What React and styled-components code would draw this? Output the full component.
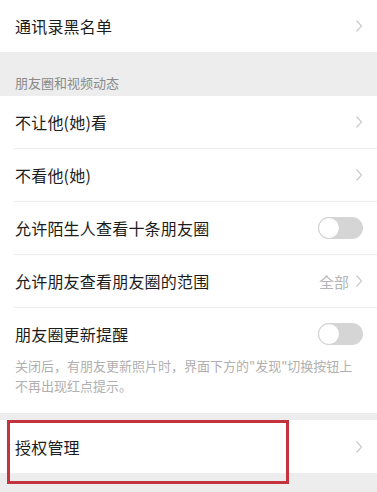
import styled, { createGlobalStyle } from 'styled-components';

const GlobalStyle = createGlobalStyle`
  html, body {
    margin: 0;
    padding: 0;
    background: #ededed;
  }
  body {
    font-family: "Noto Sans CJK SC", "Noto Sans", sans-serif;
    -webkit-font-smoothing: antialiased;
  }
`;

const Page = styled.div`
  width: 377px;
  height: 492px;
  overflow: hidden;
  background: #ededed;
`;

const Group = styled.div`
  position: relative;
  background: #fff;
  margin-top: ${(p) => p.$gap || 0}px;
`;

const SectionHeader = styled.div`
  height: 44px;
  box-sizing: border-box;
  padding: 21px 15px 0;
  font-size: 13px;
  line-height: 20px;
  color: #8a8a8a;
`;

// divider starts at the text indent and runs to the right edge
const Row = styled.div`
  display: flex;
  align-items: center;
  height: ${(p) => p.$height || 52}px;
  padding: 0 14px 0 15px;
  position: relative;
  margin-bottom: ${(p) => (p.$divider ? 1 : 0)}px;

  &::after {
    content: '';
    display: ${(p) => (p.$divider ? 'block' : 'none')};
    position: absolute;
    left: 14px;
    right: 0;
    bottom: -1px;
    height: 1px;
    background: #ececec;
  }
`;

const Label = styled.span`
  flex: 1;
  font-size: 16px;
  color: #1c1c1c;
  letter-spacing: 0.2px;
`;

const Value = styled.span`
  font-size: 15px;
  color: #b4b4b4;
  margin-right: 6px;
`;

const Note = styled.div`
  margin-top: -4px;
  padding: 0 14px 17px 15px;
  font-size: 13px;
  line-height: 20px;
  color: #b0b0b0;
`;

const Track = styled.div`
  width: 45px;
  height: 22px;
  border-radius: 11px;
  background: #d5d5d5;
  position: relative;
`;

const Knob = styled.div`
  position: absolute;
  left: 0;
  top: 0;
  width: 22px;
  height: 22px;
  box-sizing: border-box;
  border-radius: 50%;
  background: #fff;
  border: 1px solid #d0d0d0;
`;

const Highlight = styled.div`
  position: absolute;
  left: 7px;
  top: 0;
  width: 282px;
  height: 64px;
  box-sizing: border-box;
  border: 3px solid #c3343d;
  pointer-events: none;
`;

const Chevron = () => (
  <svg width="8" height="14" viewBox="0 0 8 14">
    <path d="M1.5 1.5 L6.5 7 L1.5 12.5" fill="none" stroke="#cdcdcd" strokeWidth="1.3" />
  </svg>
);

const Switch = () => (
  <Track>
    <Knob />
  </Track>
);

const App = () => {
  return (
    <Page>
      <GlobalStyle />
      <Group>
        <Row>
          <Label>通讯录黑名单</Label>
          <Chevron />
        </Row>
      </Group>
      <SectionHeader>朋友圈和视频动态</SectionHeader>
      <Group>
        <Row $divider>
          <Label>不让他(她)看</Label>
          <Chevron />
        </Row>
        <Row $divider>
          <Label>不看他(她)</Label>
          <Chevron />
        </Row>
        <Row $divider>
          <Label>允许陌生人查看十条朋友圈</Label>
          <Switch />
        </Row>
        <Row $divider>
          <Label>允许朋友查看朋友圈的范围</Label>
          <Value>全部</Value>
          <Chevron />
        </Row>
        <Row>
          <Label>朋友圈更新提醒</Label>
          <Switch />
        </Row>
        <Note>
          关闭后，有朋友更新照片时，界面下方的"发现"切换按钮上不再出现红点提示。
        </Note>
      </Group>
      <Group $gap={7}>
        <Row $height={53}>
          <Label>授权管理</Label>
          <Chevron />
        </Row>
        <Highlight />
      </Group>
    </Page>
  );
};

export default App;
